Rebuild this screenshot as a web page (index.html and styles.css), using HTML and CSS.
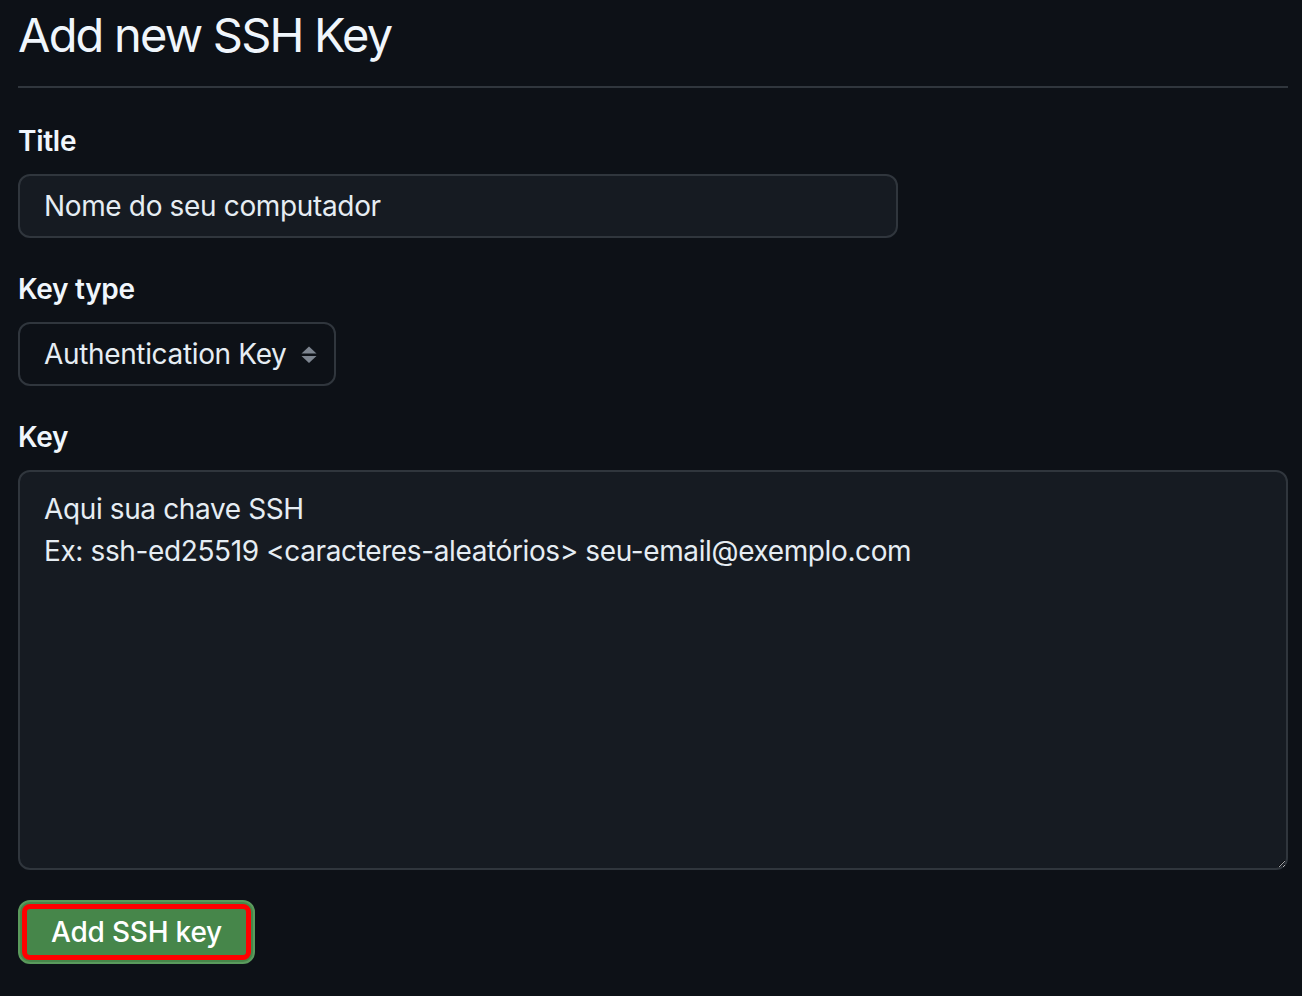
FILE: index.html
```html
<!DOCTYPE html>
<html lang="pt">
<head>
<meta charset="utf-8">
<title>Add new SSH Key</title>
<link rel="stylesheet" href="styles.css">
</head>
<body>
<main class="page">
  <h1 class="subhead">Add new SSH Key</h1>
  <form class="form">
    <div class="group">
      <label class="label">Title</label>
      <div class="input">Nome do seu computador</div>
    </div>
    <div class="group">
      <label class="label">Key type</label>
      <div class="select">
        <span>Authentication Key</span>
        <svg class="arrows" width="16" height="18" viewBox="0 0 16 18" aria-hidden="true">
          <polygon points="8,0.5 15.5,7.5 0.5,7.5" fill="#7d8590"/>
          <polygon points="0.5,10 15.5,10 8,17" fill="#7d8590"/>
        </svg>
      </div>
    </div>
    <div class="group">
      <label class="label">Key</label>
      <textarea class="textarea">Aqui sua chave SSH
Ex: ssh-ed25519 &lt;caracteres-aleatórios&gt; seu-email@exemplo.com</textarea>
    </div>
    <div class="actions">
      <button type="button" class="btn">Add SSH key</button>
    </div>
  </form>
</main>
</body>
</html>
```

FILE: styles.css
```css
html, body {
  margin: 0;
  padding: 0;
  background: #0d1117;
}

body {
  font-family: Inter, "Noto Sans", "Liberation Sans", sans-serif;
  color: #e6edf3;
  height: 996px;
  overflow: hidden;
}

.page {
  width: 1270px;
  margin-left: 18px;
}

.subhead {
  margin: 0;
  padding-top: 5px;
  height: 66px;
  padding-bottom: 15px;
  font-size: 47px;
  line-height: 60px;
  font-weight: 400;
  color: #f0f6fc;
  border-bottom: 2px solid #30363d;
  letter-spacing: -1.8px;
}

.form {
  display: flex;
  flex-direction: column;
  padding-top: 32px;
}

.group {
  display: flex;
  flex-direction: column;
  align-items: flex-start;
  margin-bottom: 30px;
}

.label {
  font-size: 28px;
  line-height: 42px;
  font-weight: 600;
  margin-bottom: 12px;
  color: #f0f6fc;
  letter-spacing: -0.3px;
}

.input {
  box-sizing: border-box;
  width: 880px;
  height: 64px;
  display: flex;
  align-items: center;
  padding: 0 24px 0 24px;
  font-size: 28px;
  letter-spacing: -0.35px;
  background: #161b22;
  border: 2px solid #30363d;
  border-radius: 12px;
}

.select {
  box-sizing: border-box;
  width: 318px;
  height: 64px;
  display: flex;
  align-items: center;
  justify-content: space-between;
  padding: 0 17px 0 24px;
  font-size: 28px;
  letter-spacing: -0.35px;
  background: #0d1117;
  border: 2px solid #30363d;
  border-radius: 12px;
}

.arrows {
  display: block;
  margin-top: 2px;
}

.textarea {
  box-sizing: border-box;
  width: 1270px;
  height: 400px;
  padding: 16px 24px 10px 24px;
  font-family: Inter, "Noto Sans", "Liberation Sans", sans-serif;
  font-size: 28px;
  line-height: 42px;
  letter-spacing: -0.38px;
  color: #e6edf3;
  background: #161b22;
  border: 2px solid #30363d;
  border-radius: 12px;
  resize: vertical;
  outline: none;
  margin: 0;
}

.actions {
  display: flex;
}

.btn {
  box-sizing: border-box;
  width: 237px;
  height: 64px;
  font-family: Inter, "Noto Sans", "Liberation Sans", sans-serif;
  font-size: 28px;
  font-weight: 500;
  letter-spacing: -0.2px;
  color: #ffffff;
  background: #46864a;
  border: 2px solid #5a9a5c;
  border-radius: 12px;
  outline: 5px solid #ff0000;
  outline-offset: -9px;
  padding: 0;
  cursor: pointer;
}
```
